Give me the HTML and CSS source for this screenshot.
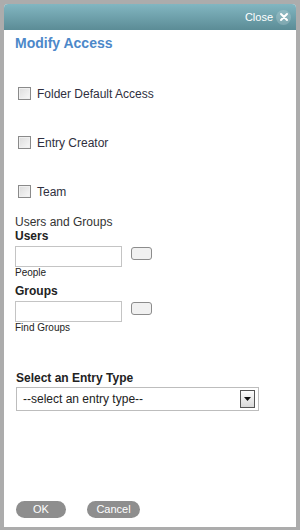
FILE: index.html
```html
<!DOCTYPE html>
<html>
<head>
<meta charset="utf-8">
<link rel="stylesheet" href="styles.css">
</head>
<body>
<div class="dialog">
  <div class="header">
    <span class="close-text">Close</span>
    <span class="close-btn"><svg width="10" height="10" viewBox="0 0 10 10"><path d="M2 2 L8 8 M8 2 L2 8" stroke="#fff" stroke-width="2" stroke-linecap="round"/></svg></span>
  </div>
  <div class="content">
    <h1 class="title">Modify Access</h1>
    <div class="check-row"><span class="cbox"></span><span class="cbox-label">Folder Default Access</span></div>
    <div class="check-row"><span class="cbox"></span><span class="cbox-label">Entry Creator</span></div>
    <div class="check-row"><span class="cbox"></span><span class="cbox-label">Team</span></div>
    <div class="section-label">Users and Groups</div>
    <div class="field-label">Users</div>
    <div class="input-row"><span class="text-input"></span><span class="small-btn"></span></div>
    <div class="hint">People</div>
    <div class="field-label groups">Groups</div>
    <div class="input-row"><span class="text-input"></span><span class="small-btn"></span></div>
    <div class="hint">Find Groups</div>
    <div class="field-label entry">Select an Entry Type</div>
    <div class="select"><span class="select-text">--select an entry type--</span><span class="select-arrow"><svg width="7" height="4" viewBox="0 0 7 4"><path d="M0 0 H7 L3.5 4 Z" fill="#111"/></svg></span></div>
    <div class="spacer"></div>
    <div class="buttons"><span class="btn ok">OK</span><span class="btn cancel">Cancel</span></div>
  </div>
</div>
</body>
</html>
```
FILE: styles.css
```css
html, body {
  margin: 0;
  padding: 0;
}
body {
  background: #acacac;
  padding: 4px 4px 3px 4px;
  font-family: "Liberation Sans", Arial, sans-serif;
  width: 292px;
  height: 523px;
}
.dialog {
  width: 292px;
  height: 523px;
  background: #fff;
  border-radius: 4px 4px 0 0;
  display: flex;
  flex-direction: column;
}
.header {
  height: 26px;
  border-radius: 4px 4px 0 0;
  background: linear-gradient(#82b6c1, #5b8c96);
  display: flex;
  align-items: center;
  justify-content: flex-end;
  padding-right: 5px;
}
.close-text {
  color: #fff;
  font-size: 11px;
  margin-right: 3px;
}
.close-btn {
  width: 15px;
  height: 15px;
  border-radius: 50%;
  background: rgba(255,255,255,0.18);
  display: flex;
  align-items: center;
  justify-content: center;
}
.content {
  flex: 1;
  display: flex;
  flex-direction: column;
  padding-left: 11px;
}
.title {
  margin: 5px 0 0 0;
  font-size: 14px;
  line-height: 16px;
  font-weight: bold;
  color: #4c88c9;
}
.check-row {
  display: flex;
  align-items: center;
  height: 14px;
  margin-left: 3px;
  margin-top: 35px;
}
.check-row + .check-row {
  margin-top: 35px;
}
.cbox {
  width: 11px;
  height: 11px;
  border: 1px solid #8a8a8a;
  background: linear-gradient(135deg, #dcdcdc, #f8f8f8);
  box-shadow: inset 0 0 0 1px #f0f0f0;
}
.cbox-label {
  margin-left: 6px;
  font-size: 12px;
  line-height: 14px;
  margin-top: 2px;
  color: #2f2f40;
}
.section-label {
  margin-top: 17px;
  font-size: 12px;
  line-height: 14px;
  color: #333;
}
.field-label {
  font-size: 12px;
  line-height: 14px;
  font-weight: bold;
  color: #222;
}
.field-label.groups {
  margin-top: 5px;
}
.field-label.entry {
  margin-top: 37px;
  margin-left: 1px;
}
.input-row {
  display: flex;
  align-items: flex-start;
  margin-top: 3px;
}
.text-input {
  width: 105px;
  height: 19px;
  border: 1px solid #c4c4c4;
  background: #fff;
}
.small-btn {
  width: 19px;
  height: 11px;
  margin-left: 9px;
  margin-top: 1px;
  border: 1px solid #8c8c8c;
  border-radius: 3px;
  background: #f1f1f1;
}
.hint {
  font-size: 10px;
  line-height: 12px;
  color: #222;
}
.select {
  margin-top: 2px;
  margin-left: 1px;
  width: 241px;
  height: 22px;
  border: 1px solid #bdbdbd;
  display: flex;
  align-items: center;
  justify-content: space-between;
}
.select-text {
  font-size: 12px;
  color: #222;
  margin-left: 6px;
}
.select-arrow {
  width: 13px;
  height: 16px;
  margin-right: 3px;
  border: 1px solid #555;
  background: linear-gradient(#fdfdfd, #d8d8d8);
  display: flex;
  align-items: center;
  justify-content: center;
}
.spacer {
  flex: 1;
}
.buttons {
  display: flex;
  gap: 21px;
  margin-left: 1px;
  margin-bottom: 9px;
}
.btn {
  height: 17px;
  border-radius: 9px;
  background: #8e8e8e;
  color: #fff;
  font-size: 11px;
  line-height: 17px;
  text-align: center;
}
.btn.ok {
  width: 50px;
}
.btn.cancel {
  width: 53px;
}
```
